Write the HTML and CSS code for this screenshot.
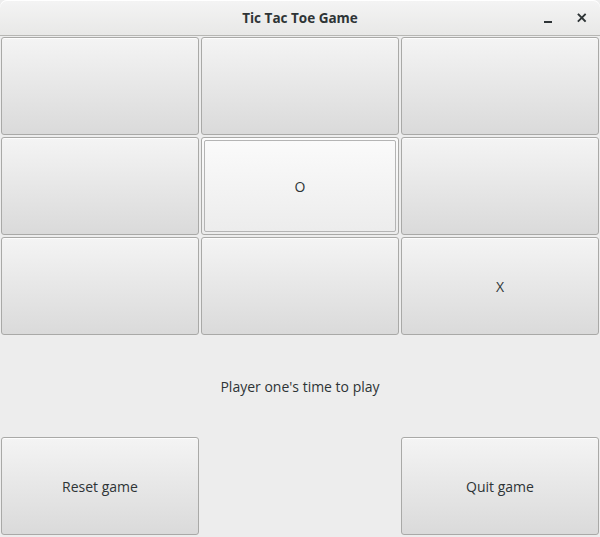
FILE: index.html
```html
<!DOCTYPE html>
<html>
<head>
<meta charset="utf-8">
<link rel="stylesheet" href="styles.css">
</head>
<body>
<div class="window">
  <header class="titlebar">
    <span class="title">Tic Tac Toe Game</span>
    <div class="controls">
      <span class="ctl">
        <svg width="16" height="16" viewBox="0 0 16 16"><rect x="4" y="11" width="8" height="2" fill="#2e3436"/></svg>
      </span>
      <span class="ctl">
        <svg width="16" height="16" viewBox="0 0 16 16"><path d="M4.5 4.5 L11 11 M11 4.5 L4.5 11" stroke="#2e3436" stroke-width="1.8" stroke-linecap="square"/></svg>
      </span>
    </div>
  </header>
  <main class="content">
    <div class="board">
      <button class="btn"></button>
      <button class="btn"></button>
      <button class="btn"></button>
      <button class="btn"></button>
      <button class="btn focus"><span class="focusring">O</span></button>
      <button class="btn"></button>
      <button class="btn"></button>
      <button class="btn"></button>
      <button class="btn">X</button>
    </div>
    <div class="status">Player one's time to play</div>
    <div class="actions">
      <button class="btn">Reset game</button>
      <span></span>
      <button class="btn">Quit game</button>
    </div>
  </main>
</div>
</body>
</html>
```
FILE: styles.css
```css
html, body {
  margin: 0;
  padding: 0;
  background: #ededed;
}
body {
  width: 600px;
  height: 537px;
  overflow: hidden;
  font-family: "Open Sans", "DejaVu Sans", sans-serif;
  color: #2e3436;
}
.window {
  width: 600px;
  height: 537px;
  display: flex;
  flex-direction: column;
  background: #ededed;
}
.titlebar {
  height: 35px;
  flex: none;
  border-bottom: 1px solid #b6b6b3;
  border-radius: 7px 7px 0 0;
  background: linear-gradient(#f4f4f4, #e8e8e7);
  display: flex;
  align-items: center;
  justify-content: center;
  position: relative;
  box-shadow: inset 0 1px #ffffff;
}
.title {
  font-weight: 700;
  font-size: 13.5px;
  color: #2e3436;
}
.controls {
  position: absolute;
  right: 10px;
  top: 10px;
  display: flex;
  gap: 18px;
}
.ctl {
  width: 16px;
  height: 16px;
  display: block;
}
.ctl svg { display: block; }
.content {
  flex: 1;
  display: flex;
  flex-direction: column;
}
.board {
  display: grid;
  grid-template-columns: repeat(3, 200px);
  grid-template-rows: repeat(3, 100px);
}
.btn {
  margin: 1px;
  border: 1px solid #a9a9a7;
  border-radius: 3px;
  background: linear-gradient(#f4f4f4, #dadada);
  font-family: "Open Sans", "DejaVu Sans", sans-serif;
  font-size: 14px;
  color: #2e3436;
  padding: 0;
  display: flex;
  align-items: center;
  justify-content: center;
  box-shadow: inset 0 1px rgba(255,255,255,0.8);
}
.btn.focus {
  background: linear-gradient(#fbfbfb, #ececec);
  padding: 2px;
  align-items: stretch;
}
.focusring {
  flex: 1;
  border: 1px solid #b4b4b4;
  border-radius: 2px;
  display: flex;
  align-items: center;
  justify-content: center;
}
.status {
  height: 100px;
  display: flex;
  align-items: center;
  justify-content: center;
  font-size: 14px;
  padding-top: 0;
  box-sizing: border-box;
}
.actions {
  display: grid;
  grid-template-columns: repeat(3, 200px);
  grid-template-rows: 100px;
}
```
